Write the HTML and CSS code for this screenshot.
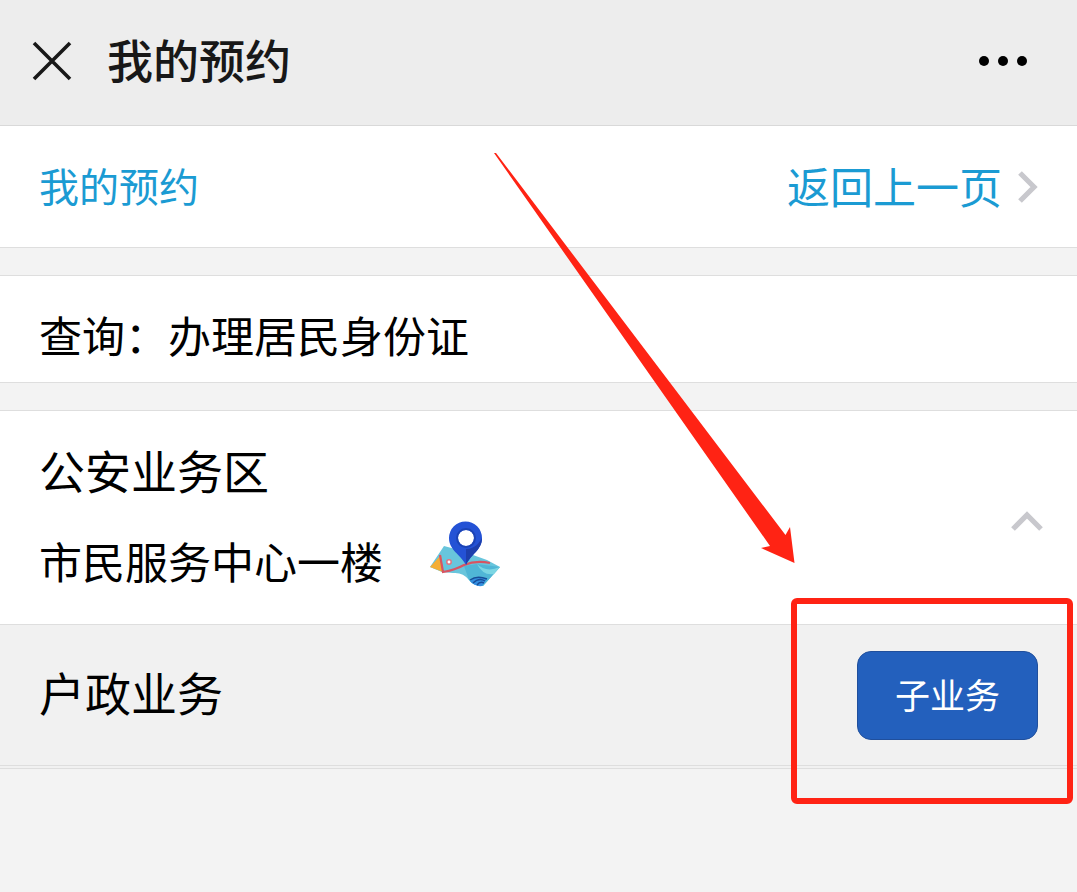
FILE: index.html
```html
<!DOCTYPE html>
<html lang="zh-CN">
<head>
  <meta charset="UTF-8" />
  <meta name="viewport" content="width=device-width, initial-scale=1" />
  <title>我的预约</title>
  <link rel="stylesheet" href="styles.css">
</head>
<body>
  <header class="topbar">
    <button type="button" class="icon-btn" aria-label="关闭">
      <svg width="40" height="40" viewBox="0 0 40 40"><path d="M2 2L38 38M38 2L2 38" fill="none" stroke="#181818" stroke-width="3.6"/></svg>
    </button>
    <h1>我的预约</h1>
    <button type="button" class="icon-btn" aria-label="更多">
      <svg width="50" height="12" viewBox="0 0 50 12"><circle cx="5" cy="6" r="5"/><circle cx="24" cy="6" r="5"/><circle cx="43" cy="6" r="5"/></svg>
    </button>
  </header>

  <main>
    <nav class="cell nav">
      <span class="nav-title">我的预约</span>
      <a href="#" class="back">返回上一页
        <svg width="20" height="32" viewBox="0 0 20 32"><path d="M2 2L16 16L2 30" fill="none" stroke="#c8c8cd" stroke-width="5.2"/></svg>
      </a>
    </nav>

    <section class="cell query">查询：办理居民身份证</section>

    <section class="group">
      <div class="area">
        <div>
          <h2>公安业务区</h2>
          <p class="place">市民服务中心一楼
            <!-- 地图图标 -->
            <svg class="map" width="72" height="66" viewBox="0 0 72 66">
              <path d="M15 25L30 29L44 34L58 39L71 46L54 65Q45 65 40 59Q34 51 24 52L13 51L1 46Z" fill="#68c5dc"/>
              <path d="M1 46L12 34L14 51Z" fill="#f4ae35"/>
              <path d="M35 45L48 43L71 46L54 65Q44 65 40 59Z" fill="#50b6d6"/>
              <path d="M48 43Q57 52 71 46L65 53Q54 55 48 43Z" fill="#7cd6e3"/>
              <path d="M11 34L14 51Q26 49 35 44Q47 39 61 42" fill="none" stroke="#d85462" stroke-width="2.2"/>
              <circle cx="20" cy="41" r="2.2" fill="#fff" stroke="#e27480" stroke-width="1.5"/>
              <path d="M41 60Q46 55 58 58L53 65Q46 66 41 60Z" fill="#348ee0"/>
              <path d="M41 59Q48 54 58 58M44 62Q50 56 56 60M48 64Q51 60 55 62" fill="none" stroke="#174d99" stroke-width="1.5"/>
              <path fill-rule="evenodd" d="M37 44C31 33 20 29 20 17A16.5 16.5 0 0 1 53 17C53 29 42 33 37 44ZM37 9A8 8 0 1 0 37 25A8 8 0 1 0 37 9Z" fill="#2452d5"/>
              <path d="M37 44V28C46 28 50 22 53 17C53 29 42 33 37 44Z" fill="#1d3fac"/>
              <circle cx="37" cy="17" r="9" fill="none" stroke="#1b43b5" stroke-width="2"/>
            </svg>
          </p>
        </div>
        <svg class="fold" width="32" height="20" viewBox="0 0 32 20"><path d="M2 18L16 4L30 18" fill="none" stroke="#c8c8cd" stroke-width="5.2"/></svg>
      </div>
      <div class="item">
        <h2>户政业务</h2>
        <button type="button" class="sub-btn">子业务</button>
        <!-- 操作提示：箭头和红框 -->
        <svg class="arrow" width="304" height="412" viewBox="0 0 304 412"><path d="M0 0L2 0L291.5 382L296 374L300.5 410L267 395L276 393Z" fill="#ff2314"/></svg>
        <div class="mark"></div>
      </div>
    </section>
  </main>
</body>
</html>
```

FILE: styles.css
```css
* {
  box-sizing: border-box;
}
body {
  min-height: 100vh;
  margin: 0;
  background: #f3f3f3;
  color: #000;
  font-family: "Noto Sans CJK SC", sans-serif;
  font-size: 43px;
  line-height: 60px;
}
h1, h2, p {
  margin: 0;
}
h1, h2 {
  font-size: 46px;
}
h2 {
  font-weight: 400;
}
svg {
  display: block;
  flex: none;
}
button {
  font-family: inherit;
  cursor: pointer;
}
.topbar {
  display: flex;
  align-items: center;
  height: 126px;
  padding: 0 48px 4px 32px;
  background: #ededed;
  border-bottom: 1px solid #d9d9d9;
}
.topbar h1 {
  flex: 1;
  margin-left: 35px;
  padding-bottom: 6px;
  font-weight: 500;
  color: #181818;
}
.icon-btn {
  padding: 0;
  border: 0;
  background: none;
}
.cell {
  padding: 28px 39px 32px;
  background: #fff;
  border-bottom: 1px solid #dedede;
}
.nav {
  display: flex;
  align-items: center;
  justify-content: space-between;
  height: 122px;
  color: #1b9bd3;
}
.nav-title {
  font-size: 40px;
}
.back {
  display: flex;
  align-items: center;
  gap: 16px;
  color: inherit;
  text-decoration: none;
}
.back svg {
  margin-top: 4px;
}
.query {
  margin: 27px 0;
  padding-bottom: 18px;
  border-top: 1px solid #dedede;
}
.group {
  background: #fff;
  border-top: 1px solid #dedede;
}
.area {
  display: flex;
  align-items: center;
  justify-content: space-between;
  padding: 28px 34px 34px 39px;
}
.place {
  display: flex;
  align-items: center;
  gap: 46px;
  margin-top: 31px;
}
.map {
  margin-top: -12px;
}
.fold {
  margin-top: 12px;
}
.item {
  position: relative;
  display: flex;
  align-items: center;
  justify-content: space-between;
  height: 145px;
  padding: 0 39px;
  background: #f1f1f1;
  border-top: 1px solid #dedede;
  border-bottom: 4px double #dedede;
}
.item h2 {
  padding-bottom: 8px;
}
.sub-btn {
  padding: 13px 37px 17px;
  border: 1px solid #204f9c;
  border-radius: 14px;
  background: #2360bd;
  color: #fff;
  font-size: 35px;
  line-height: 57px;
}
.arrow {
  position: absolute;
  right: 279px;
  bottom: 200px;
}
.mark {
  position: absolute;
  top: -27px;
  right: 4px;
  width: 282px;
  height: 206px;
  border: 6px solid #ff2314;
  border-radius: 6px;
}
```
